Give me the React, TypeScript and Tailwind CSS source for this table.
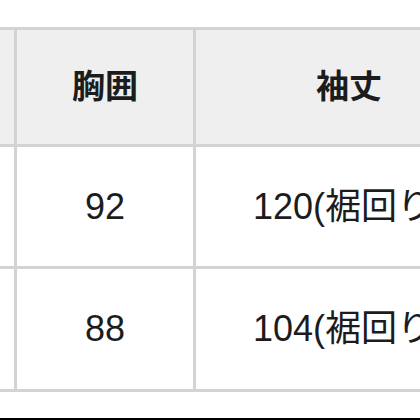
import React from "react";

const font = { fontFamily: '"Liberation Sans", "Noto Sans CJK JP", sans-serif' };

export default function App() {
  return (
    <div className="w-[420px] h-[420px] bg-white overflow-hidden flex flex-col" style={font}>
      <div className="pt-[27px] flex-1">
        <div className="ml-[-86px] w-[591px] grid grid-cols-[97px_176px_306px] grid-rows-[114px_119px_120px] gap-[3px] p-[3px] bg-[#d3d3d3] text-[#1c1c1c]">
          <div className="bg-[#efefef]" />
          <div className="bg-[#efefef] flex items-center justify-center text-[33px] font-bold">胸囲</div>
          <div className="bg-[#efefef] flex items-center justify-center text-[33px] font-bold">袖丈</div>
          <div className="bg-white" />
          <div className="bg-white flex items-center justify-center text-[36px]">92</div>
          <div className="bg-white flex items-center justify-center text-[36px] whitespace-nowrap">120(裾回り)</div>
          <div className="bg-white" />
          <div className="bg-white flex items-center justify-center text-[36px]">88</div>
          <div className="bg-white flex items-center justify-center text-[36px] whitespace-nowrap">104(裾回り)</div>
        </div>
      </div>
      <div className="h-[2px] bg-black" />
    </div>
  );
}
